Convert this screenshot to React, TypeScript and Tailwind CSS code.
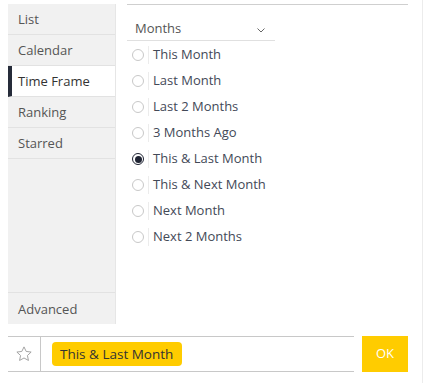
import React from "react";

const options = [
  "This Month",
  "Last Month",
  "Last 2 Months",
  "3 Months Ago",
  "This & Last Month",
  "This & Next Month",
  "Next Month",
  "Next 2 Months",
];

const navTop = ["List", "Calendar", "Time Frame", "Ranking", "Starred"];

export default function App() {
  return (
    <div
      className="relative w-[423px] h-[383px] bg-white text-[13px] text-[#4a4f5c] overflow-hidden"
      style={{ fontFamily: '"Open Sans", "Noto Sans", sans-serif' }}
    >
      <div className="absolute right-0 top-0 h-full w-px bg-[#ececec]" />
      <div className="pl-2 pt-1 pr-[15px]">
        <div className="flex h-[320px]">
          {/* Sidebar */}
          <div className="w-[108px] bg-[#f1f1f1] flex flex-col border-r border-[#e6e6e6]">
            {navTop.map((n) => {
              const active = n === "Time Frame";
              return (
                <div
                  key={n}
                  className={
                    active
                      ? "h-[31px] flex items-center pt-[2px] bg-white border-l-4 border-[#262c3a] pl-[6px] text-[#333] border-b border-b-[#e2e2e2]"
                      : "h-[31px] flex items-center pt-[2px] pl-[10px] text-[#555] border-b border-[#e2e2e2]"
                  }
                >
                  {n}
                </div>
              );
            })}
            <div className="flex-1 border-b border-[#e2e2e2]" />
            <div className="h-[31px] flex items-center pt-[2px] pl-[10px] text-[#555]">Advanced</div>
          </div>
          {/* Right panel */}
          <div className="ml-[11px] w-[281px] border-t border-[#cfcfcf]">
            <div className="w-[148px] h-[36px] border-b border-[#e0e0e0] flex items-end justify-between pl-2 pr-[10px] pb-[2px] text-[#555]">
              <span>Months</span>
              <svg width="8" height="5" viewBox="0 0 8 5" className="mb-[5px]">
                <path d="M0.5 0.5 L4 4 L7.5 0.5" fill="none" stroke="#666" strokeWidth="1" />
              </svg>
            </div>
            <div className="flex flex-col pt-[1px]">
              {options.map((o) => {
                const checked = o === "This & Last Month";
                return (
                  <div key={o} className="h-[26px] flex items-center">
                    <div className="ml-[5px] w-[12px] h-[12px] rounded-full flex items-center justify-center">
                      {checked ? (
                        <div className="w-[12px] h-[12px] rounded-full border-[1.5px] border-[#1f2433] flex items-center justify-center">
                          <div className="w-[7px] h-[7px] rounded-full bg-[#1f2433]" />
                        </div>
                      ) : (
                        <div className="w-[12px] h-[12px] rounded-full border border-[#c8c8c8]" />
                      )}
                    </div>
                    <div className="ml-[4px] w-px h-[18px] bg-[#ececec]" />
                    <span className="ml-[4px] text-[#434957]">{o}</span>
                  </div>
                );
              })}
            </div>
          </div>
        </div>
        {/* Bottom bar */}
        <div className="mt-[12px] flex h-[36px]">
          <div className="w-[346px] flex border-t border-b border-[#c8c8c8]">
            <div className="w-[33px] border-r border-[#c8c8c8] flex items-center justify-center">
              <svg width="18" height="18" viewBox="0 0 24 24">
                <path
                  d="M12 2.5l2.9 6.1 6.6.8-4.9 4.6 1.3 6.6L12 17.3l-5.9 3.3 1.3-6.6L2.5 9.4l6.6-.8z"
                  fill="none"
                  stroke="#9a9a9a"
                  strokeWidth="1.2"
                  strokeLinejoin="round"
                />
              </svg>
            </div>
            <div className="flex items-center pl-[11px]">
              <span className="bg-[#ffcc00] rounded-[4px] h-[24px] pl-[8px] pr-[9px] flex items-center text-[13.5px] text-[#333]">
                This &amp; Last Month
              </span>
            </div>
          </div>
          <div className="ml-[8px] w-[46px] bg-[#ffcc00] text-white flex items-center justify-center">
            OK
          </div>
        </div>
      </div>
    </div>
  );
}
